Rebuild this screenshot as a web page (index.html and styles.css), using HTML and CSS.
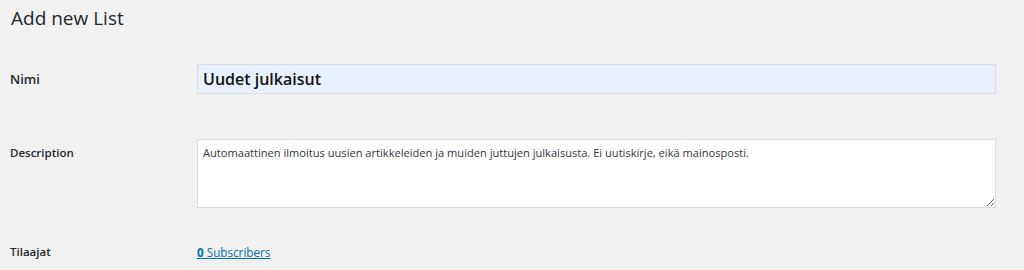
FILE: index.html
```html
<!DOCTYPE html>
<html lang="en">
<head>
  <title>Add new List</title>
  <link rel="stylesheet" href="styles.css">
</head>
<body>
  <div class="wrap">
    <h1>Add new List</h1>

    <div class="form-table">
      <div class="row row-name">
        <label class="label label-large" for="list-name">Nimi</label>
        <input type="text" id="list-name" class="name-input" value="Uudet julkaisut">
      </div>

      <div class="row row-desc">
        <label class="label" for="list-desc">Description</label>
        <textarea id="list-desc" class="desc-input">Automaattinen ilmoitus uusien artikkeleiden ja muiden juttujen julkaisusta. Ei uutiskirje, eikä mainosposti.</textarea>
      </div>

      <div class="row row-subs">
        <span class="label">Tilaajat</span>
        <a href="#" class="subs-link"><b>0</b> Subscribers</a>
      </div>
    </div>
  </div>
</body>
</html>
```

FILE: styles.css
```css
body {
  margin: 0;
  background-color: #f1f1f1;
  font-family: "Open Sans", "Noto Sans", sans-serif;
  color: #23282d;
  overflow: hidden;
}
.wrap {
  padding: 0 28px 0 10px;
}
h1 {
  margin: 0;
  padding: 4px 0 0 1px;
  font-size: 19px;
  font-weight: 400;
  line-height: 29px;
}
.row {
  display: grid;
  grid-template-columns: 187px 1fr;
  align-items: start;
}
.row-name {
  margin-top: 31px;
}
.row-desc {
  margin-top: 45px;
}
.row-subs {
  margin-top: 34px;
}
.label {
  font-size: 11.5px;
  font-weight: 600;
  line-height: 20px;
}
.label-large {
  font-size: 13px;
  padding-top: 5px;
}
.row-desc .label {
  padding-top: 4px;
}
.name-input {
  box-sizing: border-box;
  width: 100%;
  height: 30px;
  margin: 0;
  padding: 0 5px;
  border: 1px solid #dcdcdc;
  background-color: #e8f0fe;
  font-family: inherit;
  font-size: 16px;
  font-weight: 600;
  color: #111;
  outline: none;
}
.desc-input {
  box-sizing: border-box;
  display: block;
  width: 100%;
  height: 69px;
  margin: 0;
  padding: 4px 5px;
  border: 1px solid #dddddd;
  background-color: #fff;
  font-family: inherit;
  font-size: 11.1px;
  line-height: 17px;
  color: #32373c;
  resize: vertical;
  outline: none;
}
.subs-link {
  font-size: 11.7px;
  line-height: 20px;
  color: #0073aa;
}
.subs-link b {
  font-weight: 700;
}
```
